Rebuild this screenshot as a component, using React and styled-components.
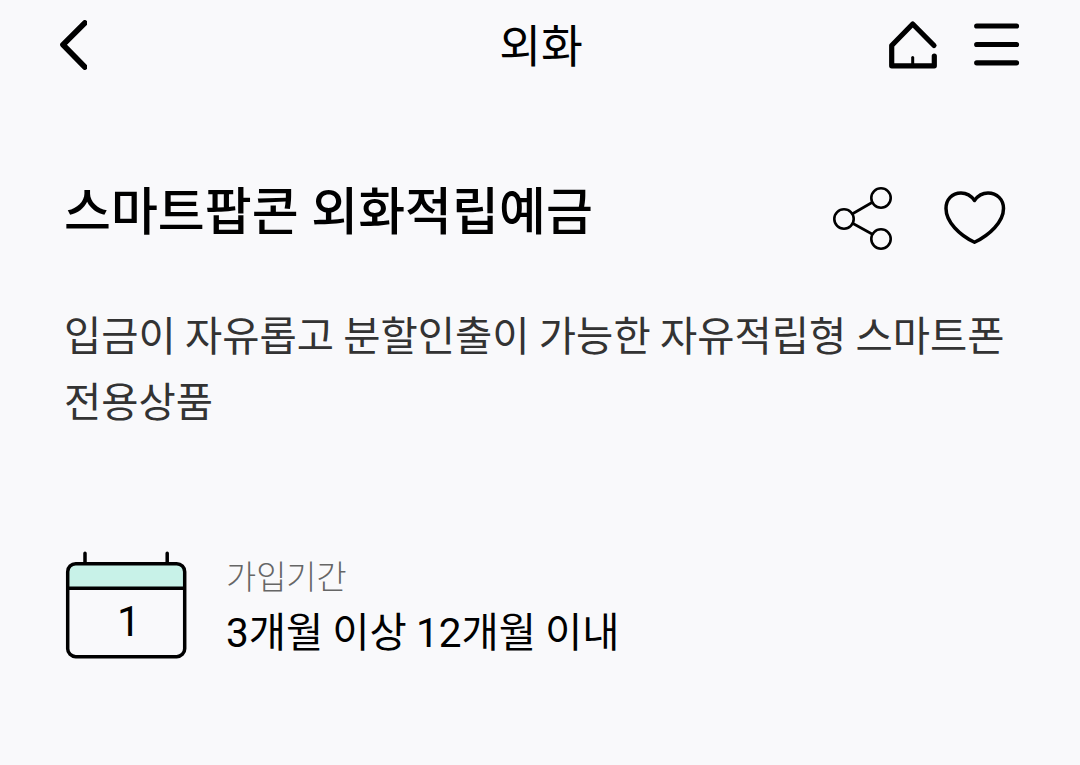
import React from 'react';
import styled, { createGlobalStyle } from 'styled-components';

const GlobalStyle = createGlobalStyle`
  * {
    box-sizing: border-box;
  }

  body {
    margin: 0;
    background: #f9f9fb;
    color: #000;
    font-family: Roboto, 'Noto Sans CJK KR', sans-serif;
  }

  h1, h2, p {
    margin: 0;
  }
`;

const Page = styled.div`
  width: 1080px;
  height: 765px;
  overflow: hidden;
  background: #f9f9fb;
`;

const Header = styled.header`
  display: grid;
  grid-template-columns: 1fr auto 1fr;
  align-items: center;
  height: 90px;
  padding: 0 60px;
`;

const HeaderTitle = styled.h1`
  padding: 6px 0 0 2px;
  font-size: 45.5px;
  font-weight: 400;
  line-height: 66px;
`;

const Actions = styled.div`
  display: flex;
  align-items: center;
  justify-content: flex-end;
  gap: ${({ gap }) => gap};
`;

const IconButton = styled.button`
  display: flex;
  justify-self: start;
  padding: 0;
  border: 0;
  background: none;
  color: #000;
`;

const Icon = styled.svg`
  display: block;
  overflow: ${({ $clip }) => ($clip ? 'hidden' : 'visible')};
  fill: none;
  stroke: currentColor;
  stroke-linecap: round;
  stroke-linejoin: round;
`;

const Content = styled.main`
  padding: 85px 64px 0;
`;

const TitleRow = styled.div`
  display: flex;
  align-items: flex-start;
  justify-content: space-between;
  height: 76px;
  padding-right: 10px;
`;

const ProductActions = styled(Actions)`
  padding-top: 12px;
`;

const ProductName = styled.h2`
  font-size: 51px;
  font-weight: 500;
  line-height: 76px;
`;

const Description = styled.p`
  margin-top: 53px;
  color: #333;
  font-size: 40.5px;
  line-height: 66px;
  word-spacing: -0.8px;
  white-space: nowrap;
`;

const Period = styled.section`
  display: flex;
  align-items: flex-start;
  gap: 39px;
  margin-top: 115px;
  padding-left: 1px;
`;

const PeriodText = styled.div`
  padding-top: 3px;
`;

const Label = styled.p`
  color: #666;
  font-size: 32.8px;
  font-weight: 300;
  line-height: 48px;
`;

const Value = styled.p`
  font-size: 40.5px;
  line-height: 62px;
  word-spacing: -1px;
  white-space: nowrap;
`;

const DayNumber = styled.text`
  fill: #000;
  stroke: none;
  font-family: Roboto, sans-serif;
  font-size: 42px;
`;

const BackIcon = () => (
    <Icon $clip width="27" height="50" viewBox="60 20 27 50" strokeWidth="5.7">
        <path d="M84.800 23L63 44.800L84.800 67" />
    </Icon>
);

const HomeIcon = () => (
    <Icon width="49" height="48" viewBox="889 21 49 48" strokeWidth="5.2">
        <path d="M934 45.500L912.700 24 891.700 45.500V65.800h42.600V56" />
        <path d="M912.700 65V57.500" strokeWidth="3" />
    </Icon>
);

const MenuIcon = () => (
    <Icon width="46" height="44" viewBox="974 23 46 44" strokeWidth="5.2">
        <path d="M976.700 26h39.800M976.700 44.500h39.800M976.700 62.800h39.800" />
    </Icon>
);

const ShareIcon = () => (
    <Icon width="59" height="64" viewBox="833 187 59 64" strokeWidth="2.6">
        <circle cx="844" cy="219" r="9.700" />
        <circle cx="881" cy="198" r="9.700" />
        <circle cx="881" cy="239" r="9.700" />
        <path d="M853 213.500L872 202.500M853 223.500L872 234" />
    </Icon>
);

const HeartIcon = () => (
    <Icon width="62" height="58" viewBox="944 190 62 58" strokeWidth="3.5">
        <path d="M974.500 200.500C971 195.500 966.500 193 961 193C952 193 946 199.500 946 208.500C946 222 959.500 235 974.500 242.300C989.500 235 1003.500 222 1003.500 208.500C1003.500 199.500 997 193 988 193C982.500 193 978 195.500 974.500 200.500Z" />
    </Icon>
);

const CalendarIcon = () => (
    <Icon width="122" height="108" viewBox="65 551 122 108" strokeWidth="3.500">
        <path d="M85 553.300v10M167.200 553.300v10" />
        <path d="M67.700 588V571.700q0-8 8-8h101q8 0 8 8V588z" fill="#c8f2e8" stroke="none" />
        <rect x="67.700" y="563.700" width="117" height="93" rx="8" />
        <path d="M68 588.300h116" />
        <DayNumber x="117" y="635.500">1</DayNumber>
    </Icon>
);

const App = () => {
    return (
        <Page>
            <GlobalStyle />
            <Header>
                <IconButton aria-label="뒤로"><BackIcon /></IconButton>
                <HeaderTitle>외화</HeaderTitle>
                <Actions gap="36px">
                    <IconButton aria-label="홈"><HomeIcon /></IconButton>
                    <IconButton aria-label="메뉴"><MenuIcon /></IconButton>
                </Actions>
            </Header>

            <Content>
                <TitleRow>
                    <ProductName>스마트팝콘 외화적립예금</ProductName>
                    <ProductActions gap="52px">
                        <IconButton aria-label="공유"><ShareIcon /></IconButton>
                        <IconButton aria-label="찜"><HeartIcon /></IconButton>
                    </ProductActions>
                </TitleRow>
                <Description>
                    입금이 자유롭고 분할인출이 가능한 자유적립형 스마트폰
                    <br />
                    전용상품
                </Description>

                <Period>
                    <CalendarIcon />
                    <PeriodText>
                        <Label>가입기간</Label>
                        <Value>3개월 이상 12개월 이내</Value>
                    </PeriodText>
                </Period>
            </Content>
        </Page>
    );
};

export default App;
